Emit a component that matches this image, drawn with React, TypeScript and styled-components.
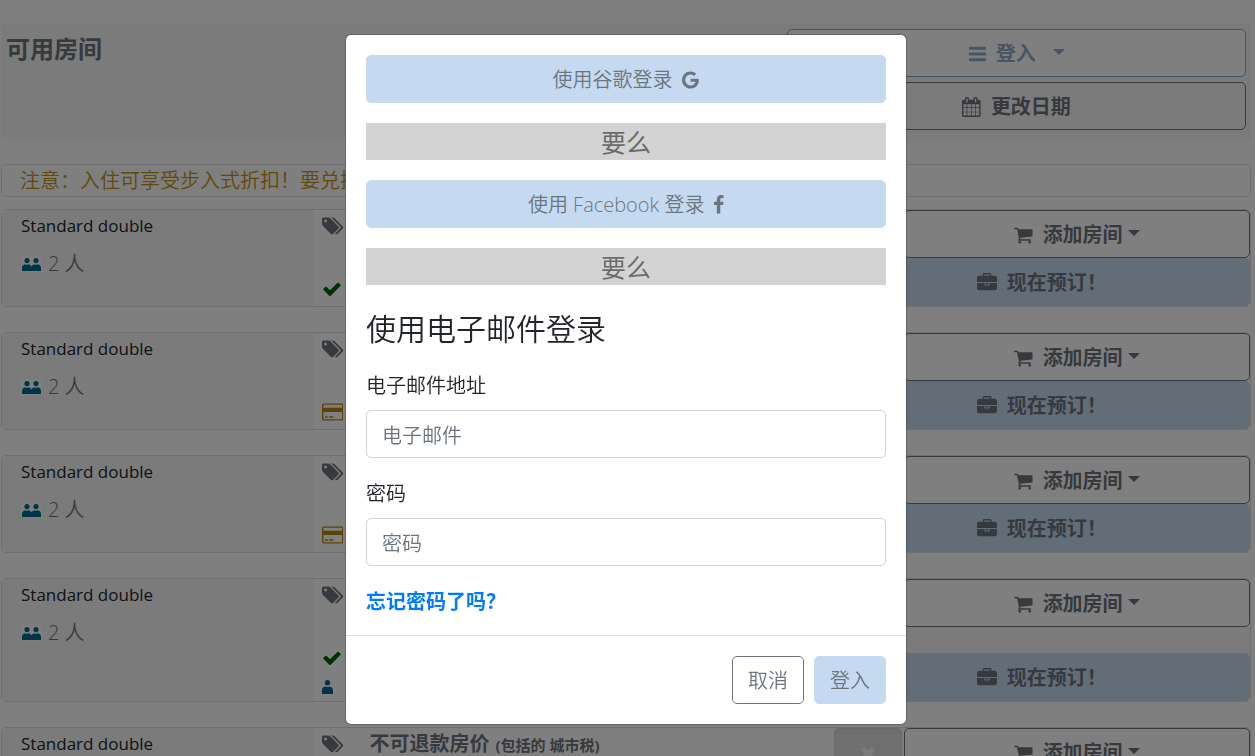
import React from "react";
import styled, { createGlobalStyle, css } from "styled-components";

const GlobalStyle = createGlobalStyle`
  *, *::before, *::after { box-sizing: border-box; }
  html, body { margin: 0; min-height: 100%; background: #fff; }
  body {
    font-family: "Open Sans", "Noto Sans CJK SC", sans-serif;
    font-size: 20px;
    font-weight: 350;
    line-height: 30px;
    color: #212529;
    overflow: hidden;
  }
  h1, h2, h3, p { margin: 0; }
  button, input { font: inherit; }
`;

/* ---------- icons ---------- */

const icons = {
  bars: {
    box: "0 0 1536 1792",
    d: "M1536 1344v128q0 26-19 45t-45 19H64q-26 0-45-19t-19-45v-128q0-26 19-45t45-19h1408q26 0 45 19t19 45zm0-512v128q0 26-19 45t-45 19H64q-26 0-45-19t-19-45V832q0-26 19-45t45-19h1408q26 0 45 19t19 45zm0-512v128q0 26-19 45t-45 19H64q-26 0-45-19T0 448V320q0-26 19-45t45-19h1408q26 0 45 19t19 45z",
  },
  calendar: {
    box: "64 0 1664 1792",
    d: "M192 1664h288v-288h-288v288zm352 0h320v-288h-320v288zm-352-352h288v-320h-288v320zm352 0h320v-320h-320v320zm-352-384h288v-288h-288v288zm736 736h320v-288h-320v288zm-384-736h320v-288h-320v288zm768 736h288v-288h-288v288zm-384-352h320v-320h-320v320zm-352-864v-288q0-13-9.5-22.5t-22.5-9.5h-64q-13 0-22.5 9.5t-9.5 22.5v288q0 13 9.5 22.5t22.5 9.5h64q13 0 22.5-9.5t9.5-22.5zm736 864h288v-320h-288v320zm-384-384h320v-288h-320v288zm384 0h288v-288h-288v288zm32-480v-288q0-13-9.5-22.5t-22.5-9.5h-64q-13 0-22.5 9.5t-9.5 22.5v288q0 13 9.5 22.5t22.5 9.5h64q13 0 22.5-9.5t9.5-22.5zm384-64v1280q0 52-38 90t-90 38h-1408q-52 0-90-38t-38-90v-1280q0-52 38-90t90-38h128v-96q0-66 47-113t113-47h64q66 0 113 47t47 113v96h384v-96q0-66 47-113t113-47h64q66 0 113 47t47 113v96h128q52 0 90 38t38 90z",
  },
  cart: {
    box: "64 0 1664 1792",
    d: "M704 1536q0 52-38 90t-90 38-90-38-38-90 38-90 90-38 90 38 38 90zm896 0q0 52-38 90t-90 38-90-38-38-90 38-90 90-38 90 38 38 90zm128-1088v512q0 24-16.5 42.5t-40.5 21.5l-1044 122q13 60 13 70 0 16-24 64h920q26 0 45 19t19 45-19 45-45 19h-1024q-26 0-45-19t-19-45q0-11 8-31.5t16-36 21.5-40 15.5-29.5l-177-823h-204q-26 0-45-19t-19-45 19-45 45-19h256q16 0 28.5 6.5t19.5 15.5 13 24.5 8 26 5.5 29.5 4.5 26h1201q26 0 45 19t19 45z",
  },
  briefcase: {
    box: "0 0 1792 1792",
    d: "M640 256h512v-128h-512v128zm1152 640v480q0 66-47 113t-113 47h-1472q-66 0-113-47t-47-113v-480h672v160q0 26 19 45t45 19h320q26 0 45-19t19-45v-160h672zm-768 0v128h-256v-128h256zm768-480v384h-1792v-384q0-66 47-113t113-47h352v-160q0-40 28-68t68-28h576q40 0 68 28t28 68v160h352q66 0 113 47t47 113z",
  },
  tags: {
    box: "0 0 1920 1792",
    d: "M448 448q0-53-37.5-90.5t-90.5-37.5-90.5 37.5-37.5 90.5 37.5 90.5 90.5 37.5 90.5-37.5 37.5-90.5zm1067 576q0 53-37 90l-491 492q-39 37-91 37-53 0-90-37l-715-716q-38-37-64.5-101t-26.5-117v-416q0-52 38-90t90-38h416q53 0 117 26.5t102 64.5l715 714q37 39 37 91zm384 0q0 53-37 90l-491 492q-39 37-91 37-36 0-59-14t-53-45l470-470q37-37 37-90 0-52-37-91l-715-714q-38-38-102-64.5t-117-26.5h224q53 0 117 26.5t102 64.5l715 714q37 39 37 91z",
  },
  check: {
    box: "0 0 1792 1792",
    d: "M1671 566q0 40-28 68l-724 724-136 136q-28 28-68 28t-68-28l-136-136-362-362q-28-28-28-68t28-68l136-136q28-28 68-28t68 28l294 295 656-657q28-28 68-28t68 28l136 136q28 28 28 68z",
  },
  card: {
    box: "0 0 1920 1792",
    d: "M1760 128q66 0 113 47t47 113v1216q0 66-47 113t-113 47h-1600q-66 0-113-47t-47-113v-1216q0-66 47-113t113-47h1600zm-1600 128q-13 0-22.5 9.5t-9.5 22.5v224h1664v-224q0-13-9.5-22.5t-22.5-9.5h-1600zm1600 1280q13 0 22.5-9.5t9.5-22.5v-608h-1664v608q0 13 9.5 22.5t22.5 9.5h1600zm-1504-128v-128h256v128h-256zm384 0v-128h384v128h-384z",
  },
  times: {
    box: "192 0 1408 1792",
    d: "M1490 1322q0 40-28 68l-136 136q-28 28-68 28t-68-28l-294-294-294 294q-28 28-68 28t-68-28l-136-136q-28-28-28-68t28-68l294-294-294-294q-28-28-28-68t28-68l136-136q28-28 68-28t68 28l294 294 294-294q28-28 68-28t68 28l136 136q28 28 28 68t-28 68l-294 294 294 294q28 28 28 68z",
  },
  google: {
    box: "128 0 1536 1792",
    d: "M896 786h725q12 67 12 128 0 217-91 387.5t-259.5 266.5-386.5 96q-157 0-299-60.5t-245-163.5-163.5-245-60.5-299 60.5-299 163.5-245 245-163.5 299-60.5q300 0 515 201l-209 201q-123-119-306-119-129 0-238.5 65t-173.5 176.5-64 243.5 64 243.5 173.5 176.5 238.5 65q87 0 160-24t120-60 82-82 51.5-87 22.5-78h-436v-264z",
  },
  facebook: {
    box: "479 0 864 1792",
    d: "M1343 12v264h-157q-86 0-116 36t-30 108v189h293l-39 296h-254v759h-306v-759h-255v-296h255v-218q0-186 104-288.5t277-102.5q147 0 228 12z",
  },
  person: {
    box: "0 0 11 14",
    d: "M5.5 0a2.7 2.7 0 1 1 0 5.4a2.7 2.7 0 0 1 0-5.4zM0 14V10.500q0-3.600 3.400-4.100q2.100 1.200 4.200 0Q11 6.900 11 10.500v3.500z",
  },
  people: {
    box: "-1 -1 21 15",
    d: "M5 0a2.600 2.600 0 1 1 0 5.200a2.600 2.600 0 0 1 0-5.200zM14 0a2.600 2.600 0 1 1 0 5.200a2.600 2.600 0 0 1 0-5.200zM0 13V10Q0 7 3.200 6.200q1.800 1 3.600 0Q9 7 9.500 8.500Q10 7 12.200 6.200q1.800 1 3.600 0Q19 7 19 10V13z",
  },
};

type IconName = keyof typeof icons;

const Glyph = styled.svg<{ $size: number }>`
  display: block;
  flex: none;
  height: ${(p) => p.$size}px;
  fill: currentColor;
`;

function Icon({ name, size = 20 }: { name: IconName; size?: number }) {
  return (
    <Glyph viewBox={icons[name].box} $size={size} aria-hidden="true">
      <path d={icons[name].d} />
    </Glyph>
  );
}

const Caret = styled.span`
  border-top: 6px solid;
  border-left: 6px solid transparent;
  border-right: 6px solid transparent;
`;

/* ---------- page ---------- */

const Page = styled.main`
  position: relative;
  padding: 24px 4px 0 1px;
  height: 100vh;
  overflow: hidden;
`;

const MapArt = styled.svg`
  position: absolute;
  top: 0;
  right: 0;
  width: 255px;
  height: 480px;
  z-index: -1;
`;

function WorldMap() {
  return (
    <MapArt viewBox="0 0 255 480" aria-hidden="true">
      <g fill="#efefef">
        <path d="M176 24q32-10 52-24h27v24z" opacity=".55" />
        <path d="M106 139h74l8 9 12 7-4 9h-96l6-14zM216 139h39v70h-45l-12-8-14 3 4-7h30l-2-16 8-16-8-12z" />
        <path d="M106 197h80l-3 7-8 5h-66z" />
        <path d="M118 307h52l-10 25h-24z" opacity=".65" />
        <path d="M218 429h37v60l-16-36z" />
        <path d="M251 24h4v500h-4z" opacity=".8" />
      </g>
      <path d="M190 139l6 6 10-6 8 8-6 17h-10v-12zM182 197q6-6 14-1l-2 5-8 1-2 8h-5z" fill="#fcfcfc" />
      <g fill="none" stroke="#efefef" strokeWidth="2">
        <path d="M82 139q-4 14-8 25M88 139q-4 14-5 25M62 197v12M72 197l-2 12" />
        <path d="M68 307q6 12 8 25M76 307l-2 25M104 307l-2 25M106 307q14 18 32 25M182 307q-2 12 0 25M184 310l36 12 35 8M232 307v20" />
        <path d="M122 429q14 18 26 25M140 429l10 25M144 429q22 16 40 25M180 429l4 25M228 440v16" />
      </g>
      <path
        d="M178 24q32-16 52-24M188 22q30-10 67-20M198 24q20-12 57-12M224 22l31-4M206 10l10 10M216 4l12 16M232 2l12 14"
        fill="none"
        stroke="#e6e6e6"
        strokeWidth="2"
        strokeDasharray="5 2"
      />
    </MapArt>
  );
}

const Header = styled.header`
  display: flex;
  justify-content: space-between;
  padding: 5px 5px 9px;
  background: #f7f7f7;
`;

const Title = styled.h1`
  padding: 5px 0;
  font-size: 24px;
  font-weight: 700;
  line-height: 30px;
  color: #6c757d;
`;

const HeaderActions = styled.div`
  display: flex;
  flex-direction: column;
  flex: 0 0 37%;
  gap: 5px;
`;

const tones = {
  outline: css`
    border-color: #6c757d;
    background: transparent;
    color: #6c757d;
  `,
  blueOutline: css`
    border-color: #84a6c6;
    background: #fff;
    color: #8fabc8;
  `,
  blue: css`
    border-color: #c5daf1;
    background: #c5daf1;
    color: #6c757d;
  `,
  muted: css`
    border-color: #d2d2d2;
    background: #dfdfdf;
    color: #f7f7f7;
  `,
};

const Button = styled.button<{ $tone: keyof typeof tones; $bold?: boolean }>`
  display: flex;
  align-items: center;
  justify-content: center;
  gap: 10px;
  padding: 9px 15px 7px;
  border: 1px solid;
  border-radius: 5px;
  line-height: 30px;
  font-weight: ${(p) => (p.$bold ? 700 : 350)};
  white-space: nowrap;
  ${(p) => tones[p.$tone]}
`;

const CaretSlot = styled.span<{ $wide?: boolean }>`
  display: flex;
  margin-left: ${(p) => (p.$wide ? 7 : -5)}px;
  padding-bottom: 4px;
`;

const RemoveMark = styled.span`
  padding: 0 10px;
`;

const Notice = styled.p`
  margin: 25px 0 12px;
  padding: 1px 18px 0;
  border: 1px solid #dfdfdf;
  border-radius: 5px;
  background: #fff;
  line-height: 30px;
  color: #c8900f;
`;

const RoomList = styled.section`
  display: flex;
  flex-direction: column;
  gap: 25px;
`;

const RoomCard = styled.article`
  display: flex;
  border: 1px solid #dfdfdf;
  border-radius: 5px;
  background: #fff;
`;

const RoomInfo = styled.div`
  flex: 0 0 25%;
  padding: 1px 19px;
  background: #f7f7f7;
`;

const RoomName = styled.h2`
  font-size: 17px;
  font-weight: 500;
  line-height: 30px;
`;

const Guests = styled.p`
  display: flex;
  align-items: center;
  gap: 6px;
  margin-top: 8px;
  color: #6c757d;
`;

const PeopleTile = styled.span`
  background: #fff;
  color: #006b8f;
`;

const Offer = styled.div`
  display: flex;
  flex: 1;
  flex-direction: column;
  min-width: 0;
`;

const RateRow = styled.div`
  display: flex;
  gap: 2px;
`;

const Rate = styled.div`
  display: flex;
  flex: 1;
  gap: 26px;
  height: 32px;
  padding-left: 8px;
  align-items: center;
  font-weight: 700;
  color: #6c757d;
`;

const RateName = styled.span`
  display: flex;
  align-items: baseline;
  gap: 6px;
`;

const TaxNote = styled.small`
  font-size: 15px;
`;

const CartSlot = styled.div`
  display: grid;
  flex: 0 0 37%;
`;

const BookRow = styled.div`
  display: flex;
`;

const Terms = styled.ul`
  flex: 1;
  margin: 0;
  padding: 16px 0 0 8px;
  list-style: none;
`;

const Term = styled.li<{ $color: string }>`
  display: flex;
  align-items: center;
  height: 29px;
  color: ${(p) => p.$color};
`;

const BookSlot = styled.div`
  display: flex;
  flex: 0 0 44.5%;
  flex-direction: column;
  justify-content: flex-end;
  background: #f7f7f7;
`;

/* ---------- dialog ---------- */

const Backdrop = styled.div`
  position: fixed;
  inset: 0;
  display: flex;
  align-items: flex-start;
  justify-content: center;
  padding: 34px 3px 0 0;
  background: rgba(0, 0, 0, 0.5);
`;

const Dialog = styled.form`
  width: 562px;
  max-width: 100%;
  border: 1px solid rgba(0, 0, 0, 0.2);
  border-radius: 6px;
  background: #fff;
  background-clip: padding-box;
`;

const DialogBody = styled.div`
  display: flex;
  flex-direction: column;
  gap: 20px;
  padding: 20px 20px 19px;
`;

const Divider = styled.p`
  padding-top: 2px;
  background: #d3d3d3;
  font-size: 25px;
  font-weight: 400;
  line-height: 35px;
  text-align: center;
  color: #6b6b6b;
`;

const DialogTitle = styled.h2`
  padding: 6px 0 3px;
  font-size: 30px;
  font-weight: 350;
  line-height: 36px;
`;

const Field = styled.div`
  display: flex;
  flex-direction: column;
  gap: 10px;
`;

const Label = styled.label`
  padding-top: 2px;
  line-height: 28px;
`;

const TextInput = styled.input`
  width: 100%;
  height: 48px;
  padding: 9px 15px 7px;
  border: 1px solid #ced4da;
  border-radius: 5px;
  background: #fff;
  line-height: 30px;
  &::placeholder {
    color: #6c757d;
    opacity: 1;
  }
`;

const ForgotLink = styled.a`
  align-self: flex-start;
  padding-top: 2px;
  line-height: 28px;
  font-weight: 700;
  color: #007bff;
  text-decoration: none;
`;

const DialogFooter = styled.footer`
  display: flex;
  justify-content: flex-end;
  gap: 10px;
  padding: 20px;
  border-top: 1px solid #dee2e6;
`;

/* ---------- data ---------- */

type TermKind = "check" | "card" | "person";

const termStyles: Record<TermKind, { color: string; size: number }> = {
  check: { color: "#006400", size: 20 },
  card: { color: "#b8860b", size: 20 },
  person: { color: "#006b8f", size: 14 },
};

interface Room {
  terms: TermKind[];
  rate?: string;
  tax?: string;
}

const rooms: Room[] = [
  { terms: ["check"] },
  { terms: ["card"] },
  { terms: ["card"] },
  { terms: ["check", "person"] },
  { terms: ["card"], rate: "不可退款房价", tax: "(包括的 城市税)" },
];

function RoomOffer({ room }: { room: Room }) {
  return (
    <RoomCard>
      <RoomInfo>
        <RoomName>Standard double</RoomName>
        <Guests>
          <PeopleTile>
            <Icon name="people" size={15} />
          </PeopleTile>
          2 人
        </Guests>
      </RoomInfo>
      <Offer>
        <RateRow>
          <Rate>
            <Icon name="tags" />
            {room.rate && (
              <RateName>
                {room.rate}
                <TaxNote>{room.tax}</TaxNote>
              </RateName>
            )}
          </Rate>
          {room.rate && (
            <Button type="button" $tone="muted" aria-label="移除">
              <RemoveMark>
                <Icon name="times" />
              </RemoveMark>
            </Button>
          )}
          <CartSlot>
            <Button type="button" $tone="outline" $bold>
              <Icon name="cart" />
              添加房间
              <CaretSlot>
                <Caret />
              </CaretSlot>
            </Button>
          </CartSlot>
        </RateRow>
        <BookRow>
          <Terms>
            {room.terms.map((t) => (
              <Term key={t} $color={termStyles[t].color}>
                <Icon name={t} size={termStyles[t].size} />
              </Term>
            ))}
          </Terms>
          <BookSlot>
            <Button type="button" $tone="blue" $bold>
              <Icon name="briefcase" />
              现在预订！
            </Button>
          </BookSlot>
        </BookRow>
      </Offer>
    </RoomCard>
  );
}

export default function App() {
  return (
    <>
      <GlobalStyle />
      <Page>
        <WorldMap />
        <Header>
          <Title>可用房间</Title>
          <HeaderActions>
            <Button type="button" $tone="blueOutline" $bold>
              <Icon name="bars" />
              登入
              <CaretSlot $wide>
                <Caret />
              </CaretSlot>
            </Button>
            <Button type="button" $tone="outline" $bold>
              <Icon name="calendar" />
              更改日期
            </Button>
          </HeaderActions>
        </Header>
        <Notice>注意：入住可享受步入式折扣！要兑换</Notice>
        <RoomList>
          {rooms.map((room, i) => (
            <RoomOffer key={i} room={room} />
          ))}
        </RoomList>
      </Page>
      <Backdrop>
        <Dialog role="dialog" aria-label="使用电子邮件登录">
          <DialogBody>
            <Button type="button" $tone="blue">
              使用谷歌登录
              <Icon name="google" />
            </Button>
            <Divider>要么</Divider>
            <Button type="button" $tone="blue">
              使用 Facebook 登录
              <Icon name="facebook" />
            </Button>
            <Divider>要么</Divider>
            <DialogTitle>使用电子邮件登录</DialogTitle>
            <Field>
              <Label htmlFor="email">电子邮件地址</Label>
              <TextInput id="email" type="email" placeholder="电子邮件" />
            </Field>
            <Field>
              <Label htmlFor="password">密码</Label>
              <TextInput id="password" type="password" placeholder="密码" />
            </Field>
            <ForgotLink href="#forgot">忘记密码了吗？</ForgotLink>
          </DialogBody>
          <DialogFooter>
            <Button type="button" $tone="outline">
              取消
            </Button>
            <Button type="submit" $tone="blue">
              登入
            </Button>
          </DialogFooter>
        </Dialog>
      </Backdrop>
    </>
  );
}
